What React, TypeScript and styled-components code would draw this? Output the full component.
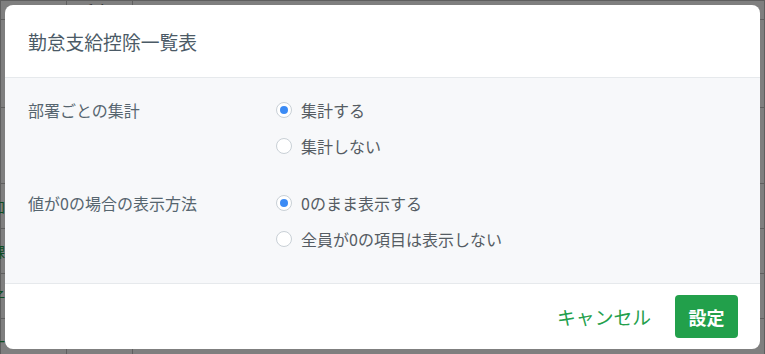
import React, { useState } from "react";
import styled, { createGlobalStyle } from "styled-components";

const GlobalStyle = createGlobalStyle`
  html, body {
    margin: 0;
    padding: 0;
    width: 765px;
    height: 354px;
    overflow: hidden;
    font-family: "Noto Sans CJK JP", "Noto Sans", sans-serif;
  }
`;

const Page = styled.div`
  position: relative;
  width: 765px;
  height: 354px;
  background: #ffffff;
  overflow: hidden;
`;

const Sheet = styled.table`
  border-collapse: collapse;
  width: 100%;
  font-size: 14px;
  color: #333;
`;

const Cell = styled.td<{ $green?: boolean }>`
  border: 1px solid #bfbfbf;
  height: 44px;
  padding: 0;
  text-indent: ${(p) => (p.$green ? "-10px" : "0")};
  color: ${(p) => (p.$green ? "#1b9a45" : "#333")};
  white-space: nowrap;
`;

const HeadCell = styled.td`
  border: 1px solid #bfbfbf;
  height: 18px;
  padding: 0 10px;
  line-height: 14px;
  font-size: 18px;
  vertical-align: bottom;
`;

const Overlay = styled.div`
  position: absolute;
  inset: 0;
  background: rgba(0, 0, 0, 0.5);
`;

const Dialog = styled.div`
  position: absolute;
  left: 5px;
  top: 5px;
  width: 755px;
  height: 344px;
  background: #ffffff;
  border-radius: 8px;
  overflow: hidden;
  display: flex;
  flex-direction: column;
`;

const Header = styled.div`
  height: 72px;
  display: flex;
  align-items: center;
  padding: 0 23px;
  border-bottom: 1px solid #e6e9ec;
`;

const Title = styled.h2`
  margin: 0;
  font-size: 18.8px;
  font-weight: 400;
  color: #4b5a66;
`;

const Body = styled.div`
  flex: 1;
  background: #f7f8fa;
  padding: 14px 23px 0;
  display: flex;
  flex-direction: column;
  gap: 21px;
`;

const Group = styled.div`
  display: grid;
  grid-template-columns: 248px 1fr;
`;

const Label = styled.div`
  height: 36px;
  display: flex;
  align-items: center;
  font-size: 16px;
  color: #56656f;
`;

const Options = styled.div`
  display: flex;
  flex-direction: column;
`;

const Option = styled.label`
  height: 36px;
  display: flex;
  align-items: center;
  gap: 9px;
  font-size: 16px;
  color: #555c63;
  cursor: pointer;
`;

const Radio = styled.span<{ $checked: boolean }>`
  width: 16px;
  height: 16px;
  box-sizing: border-box;
  border-radius: 50%;
  border: 1px solid #c9d0d6;
  background: #ffffff;
  display: flex;
  align-items: center;
  justify-content: center;
  &::after {
    content: "";
    width: 8px;
    height: 8px;
    border-radius: 50%;
    background: ${(p) => (p.$checked ? "#3b8bf5" : "transparent")};
  }
`;

const Footer = styled.div`
  height: 65px;
  border-top: 1px solid #e6e9ec;
  display: flex;
  align-items: center;
  justify-content: flex-end;
  gap: 24px;
  padding: 0 22px;
`;

const TextButton = styled.button`
  border: none;
  background: none;
  padding: 0;
  font-family: inherit;
  font-size: 18.8px;
  color: #23a04c;
  cursor: pointer;
`;

const PrimaryButton = styled.button`
  width: 63px;
  height: 43px;
  border: none;
  border-radius: 4px;
  background: #22a04b;
  color: #ffffff;
  font-family: inherit;
  font-size: 18px;
  font-weight: 700;
  cursor: pointer;
`;

type Choice = { value: string; label: string };

const groups: { key: string; label: string; choices: Choice[] }[] = [
  {
    key: "dept",
    label: "部署ごとの集計",
    choices: [
      { value: "sum", label: "集計する" },
      { value: "none", label: "集計しない" },
    ],
  },
  {
    key: "zero",
    label: "値が0の場合の表示方法",
    choices: [
      { value: "show", label: "0のまま表示する" },
      { value: "hide", label: "全員が0の項目は表示しない" },
    ],
  },
];

export default function App() {
  const [values, setValues] = useState<Record<string, string>>({
    dept: "sum",
    zero: "show",
  });

  return (
    <Page>
      <GlobalStyle />
      <Sheet>
        <tbody>
          <tr>
            <HeadCell style={{ width: 45 }}>区</HeadCell>
            <HeadCell style={{ width: 45 }}>氏名</HeadCell>
            <HeadCell />
          </tr>
          <tr>
            <Cell style={{ height: 87 }} />
            <Cell />
            <Cell />
          </tr>
          <tr>
            <Cell style={{ height: 75 }} />
            <Cell />
            <Cell />
          </tr>
          <tr>
            <Cell $green>加</Cell>
            <Cell />
            <Cell />
          </tr>
          <tr>
            <Cell $green>課</Cell>
            <Cell />
            <Cell />
          </tr>
          <tr>
            <Cell $green>子</Cell>
            <Cell />
            <Cell />
          </tr>
          <tr>
            <Cell $green>一</Cell>
            <Cell />
            <Cell />
          </tr>
        </tbody>
      </Sheet>
      <Overlay />
      <Dialog>
        <Header>
          <Title>勤怠支給控除一覧表</Title>
        </Header>
        <Body>
          {groups.map((g) => (
            <Group key={g.key}>
              <Label>{g.label}</Label>
              <Options>
                {g.choices.map((c) => (
                  <Option
                    key={c.value}
                    onClick={() => setValues({ ...values, [g.key]: c.value })}
                  >
                    <Radio $checked={values[g.key] === c.value} />
                    {c.label}
                  </Option>
                ))}
              </Options>
            </Group>
          ))}
        </Body>
        <Footer>
          <TextButton>キャンセル</TextButton>
          <PrimaryButton>設定</PrimaryButton>
        </Footer>
      </Dialog>
    </Page>
  );
}
